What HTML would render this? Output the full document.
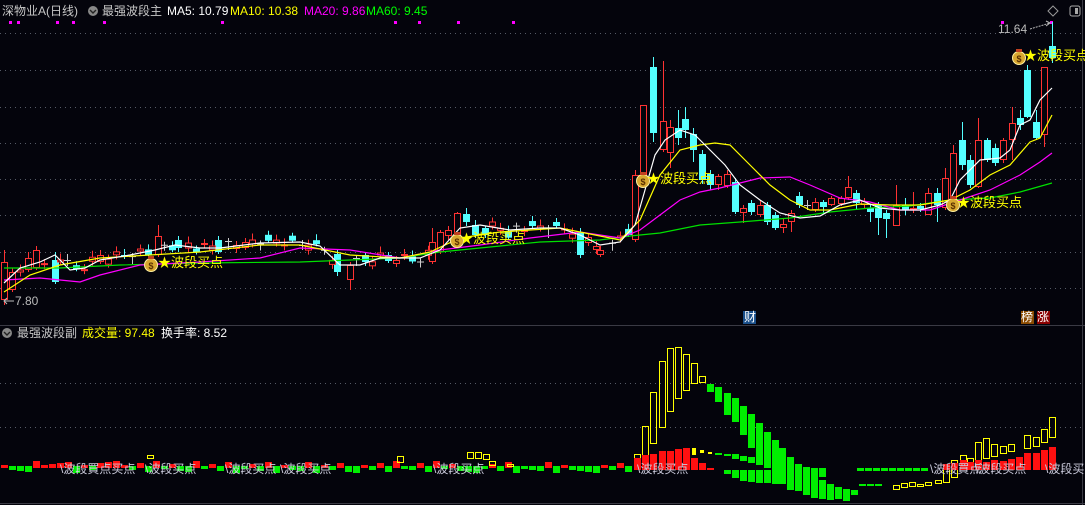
<!DOCTYPE html>
<html><head><meta charset="utf-8"><style>
html,body{margin:0;padding:0;background:#04040c;width:1085px;height:505px;overflow:hidden}
body{position:relative;font-family:"Liberation Sans","Noto Sans CJK SC",sans-serif;font-size:12px}
.t{position:absolute;white-space:nowrap;line-height:14px}
svg{position:absolute;left:0;top:0}
</style></head><body>
<svg id="s" width="1085" height="505" xmlns="http://www.w3.org/2000/svg">
<g stroke="#555a66" stroke-dasharray="1,4" stroke-width="1">
<line x1="0" y1="33.5" x2="1082" y2="33.5"/><line x1="0" y1="70.5" x2="1082" y2="70.5"/>
<line x1="0" y1="107.5" x2="1082" y2="107.5"/><line x1="0" y1="143.5" x2="1082" y2="143.5"/>
<line x1="0" y1="179.5" x2="1082" y2="179.5"/><line x1="0" y1="215.5" x2="1082" y2="215.5"/>
<line x1="0" y1="252.5" x2="1082" y2="252.5"/><line x1="0" y1="288.5" x2="1082" y2="288.5"/>
<line x1="0" y1="383.5" x2="1082" y2="383.5"/><line x1="0" y1="427.5" x2="1082" y2="427.5"/>
</g>
<line x1="0" y1="325.5" x2="1085" y2="325.5" stroke="#3a3a44"/>
<line x1="1082.5" y1="0" x2="1082.5" y2="505" stroke="#3a3a44"/>
<line x1="0" y1="503.5" x2="1085" y2="503.5" stroke="#3a3a44"/>
<g fill="#ff00ff"><rect x="9" y="21" width="3" height="3"/><rect x="17" y="21" width="3" height="3"/><rect x="56" y="21" width="3" height="3"/><rect x="72" y="21" width="3" height="3"/><rect x="103" y="21" width="3" height="3"/><rect x="221" y="21" width="3" height="3"/><rect x="394" y="21" width="3" height="3"/><rect x="418" y="21" width="3" height="3"/><rect x="457" y="21" width="3" height="3"/><rect x="512" y="21" width="3" height="3"/><rect x="1001" y="21" width="3" height="3"/><rect x="1050" y="21" width="3" height="3"/></g>
<g id="cd"></g><g id="ma" fill="none" stroke-width="1.2"></g><g id="vol"></g>
<g id="bags"></g>
<rect x="1070" y="6" width="10" height="10" fill="none" stroke="#aaa" rx="2"/>
<rect x="1075" y="8" width="3" height="6" fill="#aaa"/>
<path d="M1053 6 L1058 11 L1053 16 L1048 11 Z" fill="none" stroke="#999"/>
<path d="M1030 29 L1050 23" stroke="#bbb" stroke-dasharray="2,1"/>
<path d="M1046 21 L1050 23 L1046 26" stroke="#bbb" fill="none"/>
<path d="M4 301 L14 301 M7 298 L4 301 L7 304" stroke="#bbb" fill="none"/>
<rect x="743" y="311" width="13" height="13" fill="#1a4f8a"/>
<rect x="1021" y="311" width="13" height="13" fill="#8a4a00"/>
<rect x="1037" y="311" width="13" height="13" fill="#8a0000"/>
<circle cx="93" cy="11" r="5" fill="#888"/><path d="M90 10 L93 13 L96 10" stroke="#222" fill="none" stroke-width="1.4"/>
<circle cx="7" cy="333" r="5" fill="#888"/><path d="M4 332 L7 335 L10 332" stroke="#222" fill="none" stroke-width="1.4"/>
</svg>
<div class="t" style="left:2px;top:4px;color:#c8c8c8">深物业A(日线)</div>
<div class="t" style="left:102px;top:4px;color:#c8c8c8">最强波段主</div>
<div class="t" style="left:167px;top:4px;color:#fff">MA5: 10.79</div>
<div class="t" style="left:230px;top:4px;color:#ffff00">MA10: 10.38</div>
<div class="t" style="left:304px;top:4px;color:#ff00ff">MA20: 9.86</div>
<div class="t" style="left:366px;top:4px;color:#00ff00">MA60: 9.45</div>
<div class="t" style="left:17px;top:326px;color:#c8c8c8">最强波段副</div>
<div class="t" style="left:82px;top:326px;color:#ffff00">成交量: 97.48</div>
<div class="t" style="left:161px;top:326px;color:#fff">换手率: 8.52</div>
<div class="t" style="left:15px;top:294px;color:#bbb">7.80</div>
<div class="t" style="left:998px;top:22px;color:#bbb">11.64</div>
<div class="t" style="left:744px;top:310px;color:#fff">财</div>
<div class="t" style="left:1021px;top:310px;color:#fff">榜</div>
<div class="t" style="left:1037px;top:310px;color:#fff">涨</div>
<div class="t" style="left:158px;top:256px;color:#ffff00;font-size:13px">★波段买点</div>
<div class="t" style="left:460px;top:232px;color:#ffff00;font-size:13px">★波段买点</div>
<div class="t" style="left:647px;top:172px;color:#ffff00;font-size:13px">★波段买点</div>
<div class="t" style="left:957px;top:196px;color:#ffff00;font-size:13px">★波段买点</div>
<div class="t" style="left:1024px;top:49px;color:#ffff00;font-size:13px">★波段买点</div>
<div class="t" style="left:60px;top:462px;color:#ccd">\波段買点买点</div>
<div class="t" style="left:145px;top:462px;color:#ccd">\波段买点</div>
<div class="t" style="left:225px;top:462px;color:#ccd">\波段买点</div>
<div class="t" style="left:280px;top:462px;color:#ccd">\波段买点</div>
<div class="t" style="left:433px;top:462px;color:#ccd">\波段买点</div>
<div class="t" style="left:637px;top:462px;color:#ccd">\波段买点</div>
<div class="t" style="left:930px;top:462px;color:#ccd">\波段買点</div>
<div class="t" style="left:975px;top:462px;color:#ccd">\波段买点</div>
<div class="t" style="left:1045px;top:462px;color:#ccd">\波段买</div>
<script>
var NS="http://www.w3.org/2000/svg";
function el(p,n,a){var e=document.createElementNS(NS,n);for(var k in a)e.setAttribute(k,a[k]);document.getElementById(p).appendChild(e);return e;}
var MA5=[[4,283],[20,268],[40,262],[55,255],[70,270],[85,268],[100,260],[130,255],[155,250],[175,245],[200,248],[220,248],[260,243],[300,242],[320,246],[340,265],[360,265],[380,258],[420,258],[440,250],[460,228],[480,225],[510,230],[540,228],[560,228],[580,235],[600,245],[620,242],[635,225],[645,190],[655,155],[665,140],[680,130],[695,135],[710,150],[725,165],[740,185],[760,200],[780,213],[800,218],[820,216],[840,205],[860,200],[880,208],[900,210],[920,210],[940,205],[950,200],[960,180],[980,160],[1000,158],[1010,150],[1020,125],[1030,120],[1040,100],[1052,88]];
var MA10=[[4,292],[30,275],[60,265],[100,258],[150,255],[200,252],[260,245],[300,245],[350,255],[400,258],[430,252],[460,238],[500,232],[560,228],[600,236],[620,240],[640,220],[660,175],[680,150],[700,145],[715,143],[730,145],[750,165],[770,185],[790,200],[810,210],[830,210],[860,204],[890,205],[920,205],[950,200],[970,190],[990,175],[1010,165],[1030,142],[1040,138],[1052,115]];
var MA20=[[4,280],[40,278],[80,282],[100,275],[140,265],[200,262],[260,258],[300,248],[350,250],[400,258],[440,250],[480,245],[530,238],[580,232],[620,238],[640,230],[660,215],[680,200],[700,192],[720,188],[760,178],[790,177],[810,185],[840,198],[870,202],[900,210],[930,210],[960,200],[990,190],[1020,175],[1040,162],[1052,153]];
var MA60=[[4,268],[60,268],[120,265],[200,263],[300,262],[400,258],[440,252],[480,248],[540,242],[600,240],[630,236],[660,233],[700,225],[740,222],[790,218],[830,212],[870,208],[910,206],[950,200],[990,198],[1020,192],[1052,183]];
function pl(a,c){el("ma","polyline",{points:a.map(function(p){return p.join(",")}).join(" "),stroke:c});}
pl(MA60,"#00e000");pl(MA20,"#ff00ff");pl(MA10,"#ffff00");pl(MA5,"#ffffff");
function interp(x){for(var i=1;i<MA5.length;i++){if(x<=MA5[i][0]){var a=MA5[i-1],b=MA5[i];return a[1]+(b[1]-a[1])*(x-a[0])/(b[0]-a[0]);}}return 88;}
var C=[[4,'r',262,300,250,305],[12,'r',272,290,268,292],[28,'r',258,270,252,272],[36,'r',250,268,246,270],[55,'c',260,282,252,284],[67,'g',260,260,254,266],[100,'r',255,262,250,264],[158,'r',236,255,225,257],[178,'c',240,248,236,252],[218,'c',240,252,236,254],[245,'r',242,248,238,250],[302,'g',245,245,240,250],[337,'c',254,272,250,276],[350,'r',265,280,262,290],[365,'c',255,262,252,266],[432,'r',242,262,228,264],[440,'r',232,252,230,254],[448,'r',230,236,226,240],[457,'r',213,243,212,245],[466,'c',214,222,208,226],[475,'c',225,235,220,238],[485,'c',228,235,226,238],[580,'c',232,255,228,258],[600,'r',250,255,246,257],
[635,'r',175,240,170,242],[643,'r',105,175,105,178],[653,'c',67,133,57,142],[663,'r',121,150,61,152],[670,'r',127,153,120,168],[678,'c',128,138,110,145],[685,'c',119,130,107,138],[693,'c',134,150,128,162],[702,'c',154,180,150,184],[710,'c',174,185,170,190],[718,'r',176,185,174,190],[727,'r',174,186,170,188],[735,'c',182,212,178,214],[743,'r',208,213,205,223],[751,'c',203,212,200,215],[760,'r',205,215,200,217],[767,'c',205,222,202,225],[775,'c',215,228,212,230],[783,'r',224,228,218,233],[791,'r',213,222,210,232],[799,'c',196,205,192,208],[807,'g',205,205,200,210],[815,'r',202,210,198,212],[823,'c',202,207,200,214],[831,'r',198,205,196,206],[841,'r',198,204,196,206],[848,'r',187,198,176,200],[856,'c',193,203,190,210],[864,'r',201,205,198,208],[870,'c',208,212,205,222],[878,'c',205,218,202,235],[886,'c',213,219,210,238],[896,'r',205,226,185,226],[905,'c',205,210,198,215],[913,'r',208,210,192,213],[920,'c',206,209,203,212],[928,'r',193,215,188,215],[937,'c',193,205,188,222],[945,'r',178,208,168,210],[953,'r',153,205,145,207],[962,'c',140,165,122,170],[970,'c',160,185,155,188],[978,'r',140,187,118,188],[987,'c',140,160,138,162],[995,'c',148,163,144,166],[1003,'r',140,160,138,163],[1012,'r',123,140,107,160],[1020,'c',118,125,110,130],[1027,'c',70,117,65,118],[1036,'c',122,138,110,140],[1044,'r',67,135,67,147],[1052,'c',46,58,22,63]];
var used={};C.forEach(function(c){used[Math.round((c[0]-4)/8)]=1;});
for(var i=0;i<=78;i++){if(used[i])continue;var x=4+8*i;var y=interp(x);var n=((i*37)%11)-5;var h=2+((i*13)%5);var t=(i*7)%3==0?'c':((i*5)%4==0?'g':'r');C.push([x,t,y+n-h/2,y+n+h/2,y+n-h/2-3-(i%4),y+n+h/2+2+(i%3)]);}
C.forEach(function(c){var x=c[0],col=c[1]=='c'?'#54ffff':(c[1]=='g'?'#cccccc':'#ff3232');
el("cd","line",{x1:x+0.5,x2:x+0.5,y1:c[4],y2:c[5],stroke:col});
var h=Math.max(1,c[3]-c[2]);
if(c[1]=='c')el("cd","rect",{x:x-3,y:c[2],width:7,height:h,fill:col});
else if(c[1]=='g')el("cd","rect",{x:x-3,y:c[2],width:7,height:1,fill:col});
else el("cd","rect",{x:x-2.5,y:c[2]+0.5,width:6,height:Math.max(0.5,h-1),fill:"#04040c",stroke:col});});
var V=[];
function b(x,t,a,z){V.push([x,t,a,z]);}
[[637,454,466],[645,426,457],[653,392,444],[662,361,428],[670,348,412],[678,347,399],[686,354,391],[694,363,384],[702,376,383],[896,485,490],[904,483,488],[912,482,487],[920,484,487],[928,482,486],[938,480,484],[946,467,483],[954,460,478],[963,455,468],[970,458,467],[978,442,462],[986,438,459],[994,444,457],[1003,446,454],[1011,444,452],[1027,435,449],[1036,437,447],[1044,429,443],[1052,417,438]].forEach(function(a){b(a[0],'y',a[1],a[2]);});
[[637,458,470],[645,455,470],[653,454,470],[662,451,470],[670,451,470],[678,449,470],[686,448,470],[694,458,470],[702,463,470],[710,468,470],[946,464,470],[954,463,470],[963,460,470],[970,462,470],[978,460,470],[986,462,470],[994,460,470],[1003,461,470],[1011,459,470],[1019,457,470],[1027,453,470],[1036,453,470],[1044,450,470],[1052,447,470]].forEach(function(a){b(a[0],'r',a[1],a[2]);});
[[710,384,392],[718,387,402],[727,393,415],[735,398,422],[743,406,435],[751,414,448],[759,423,465],[767,432,468],[775,440,484],[782,448,484],[790,457,490],[798,464,491],[806,467,495],[814,468,498],[822,480,499],[830,484,500],[838,487,499],[846,489,501],[854,490,495],[862,484,486],[870,484,486],[878,484,486],
[718,453,455],[727,454,456],[735,454,459],[743,456,461],[751,457,463],[727,470,474],[735,470,478],[743,470,481],[751,470,482],[759,470,483],[767,470,483],[822,468,477],
[860,468,471],[868,468,471],[876,468,471],[884,468,471],[892,468,471],[900,468,471],[908,468,471],[916,468,471],[924,468,471]].forEach(function(a){b(a[0],'g',a[1],a[2]);});
for(var i=0;i<79;i++){var x=4+8*i;var k=(i*17)%7;var t;if(x>=40&&x<=150&&k<5)t='r';else if(x>=180&&x<=420)t=k<3?'r':'g';else t=k<2?'r':'g';
if(x>=30&&x<=60)t='r';
var hh=3+((i*11)%5);if(t=='r')b(x,'r',470-hh-2,470-2);else b(x,'g',466,466+hh);}
[[150,455,459],[400,456,463],[470,452,459],[478,452,459],[486,454,460],[492,461,466],[510,464,467]].forEach(function(a){b(a[0],'y',a[1],a[2]);});
V.forEach(function(v){var x=v[0],h=Math.max(1,v[3]-v[2]);
if(v[1]=='y')el("vol","rect",{x:x-2.5,y:v[2]+0.5,width:6,height:Math.max(1,h-1),fill:"none",stroke:"#ffff00"});
else el("vol","rect",{x:x-3,y:v[2],width:7,height:h,fill:v[1]=='r'?'#ff1010':'#00ee00'});});
el("vol","rect",{x:692,y:448,width:4,height:7,fill:"#ffff00"});el("vol","rect",{x:700,y:450,width:4,height:3,fill:"#ffff00"});el("vol","rect",{x:708,y:452,width:4,height:2,fill:"#ffff00"});
[[151,264],[457,240],[643,180],[953,204],[1019,57]].forEach(function(p){
el("bags","circle",{cx:p[0],cy:p[1]+1,r:6.5,fill:"#d8a830",stroke:"#fff0a0","stroke-width":1});
el("bags","rect",{x:p[0]-3,y:p[1]-8,width:6,height:3,fill:"#c04020"});
var t=el("bags","text",{x:p[0],y:p[1]+5,"font-size":"9","text-anchor":"middle",fill:"#5a3000","font-family":"Liberation Sans","font-weight":"bold"});t.textContent="$";});
</script>
</body></html>
